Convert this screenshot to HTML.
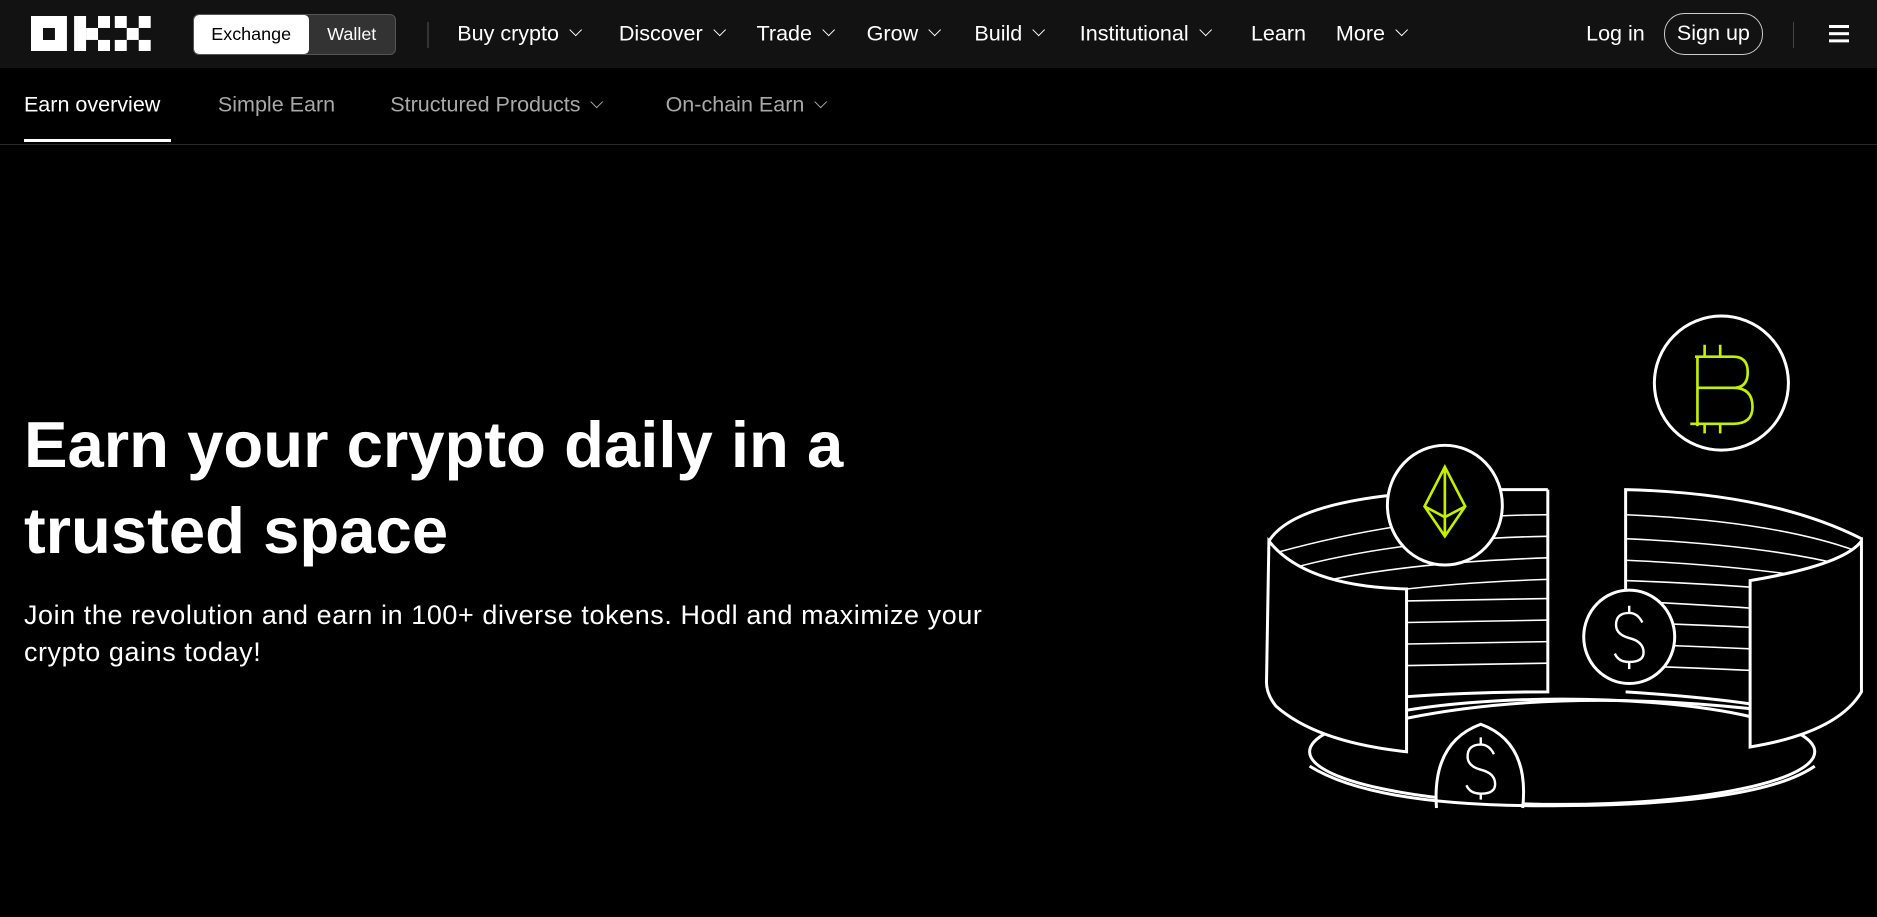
<!DOCTYPE html>
<html><head><meta charset="utf-8"><style>
html,body{margin:0;padding:0;background:#000;overflow:hidden}
#w{width:1568px;height:766px;zoom:1.19707;position:relative;font-family:"Liberation Sans",sans-serif;color:#fff}
.top{position:absolute;left:0;top:0;width:1568px;height:57px;background:#121212}
.t{position:absolute;top:28px;transform:translateY(-50%);font-size:18px;white-space:nowrap}
.chev{display:inline-block;width:7px;height:7px;border-right:1.5px solid #fff;border-bottom:1.5px solid #fff;transform:rotate(45deg);margin-left:10px;position:relative;top:-4px}
.sub{position:absolute;top:88px;transform:translateY(-50%);font-size:18px;color:#a8a8a8;white-space:nowrap}
.sub .chev{border-color:#a8a8a8}
</style></head><body><div id="w">
<div class="top">
<svg style="position:absolute;left:26px;top:13px" width="100" height="30" viewBox="0 0 100 30" fill="#fff">
<path d="M0 0h30v30H0zM10 10v10h10V10z" fill-rule="evenodd"/>
<rect x="36" y="0" width="10" height="30"/>
<rect x="46" y="10" width="10" height="10"/><rect x="56" y="0" width="10" height="10"/><rect x="56" y="20" width="10" height="10"/>
<rect x="70" y="0" width="10" height="10"/><rect x="90" y="0" width="10" height="10"/><rect x="80" y="10" width="10" height="10"/><rect x="70" y="20" width="10" height="10"/><rect x="90" y="20" width="10" height="10"/>
</svg>
<div style="position:absolute;left:161px;top:12px;width:168px;height:32px;border:1px solid #555;border-radius:5px;background:#333;overflow:hidden">
<div style="position:absolute;left:0;top:0;width:96px;height:32px;background:#fff;border-radius:4px;color:#000;font-size:15px;line-height:32px;text-align:center">Exchange</div>
<div style="position:absolute;left:96px;top:0;width:72px;height:32px;color:#fff;font-size:15px;line-height:32px;text-align:center">Wallet</div>
</div>
<div style="position:absolute;left:357px;top:18px;width:1px;height:22px;background:#333"></div>
<div class="t" style="left:382px">Buy crypto<span class="chev"></span></div>
<div class="t" style="left:517px">Discover<span class="chev"></span></div>
<div class="t" style="left:632px">Trade<span class="chev"></span></div>
<div class="t" style="left:724px">Grow<span class="chev"></span></div>
<div class="t" style="left:814px">Build<span class="chev"></span></div>
<div class="t" style="left:902px">Institutional<span class="chev"></span></div>
<div class="t" style="left:1045px">Learn</div>
<div class="t" style="left:1116px">More<span class="chev"></span></div>
<div class="t" style="left:1325px">Log in</div>
<div style="position:absolute;left:1390px;top:11px;width:81px;height:33px;border:1px solid #ccc;border-radius:17px;font-size:18px;line-height:33px;text-align:center">Sign up</div>
<div style="position:absolute;left:1498px;top:18px;width:1px;height:22px;background:#444"></div>
<div style="position:absolute;left:1528px;top:21px;width:17px;height:2px;background:#fff;box-shadow:0 6px 0 #fff,0 12px 0 #fff"></div>
</div>
<div class="sub" style="left:20px;color:#fff">Earn overview</div>
<div style="position:absolute;left:20px;top:116px;width:123px;height:3px;background:#fff"></div>
<div class="sub" style="left:182px">Simple Earn</div>
<div class="sub" style="left:326px">Structured Products<span class="chev"></span></div>
<div class="sub" style="left:556px">On-chain Earn<span class="chev"></span></div>
<div style="position:absolute;left:0;top:120px;width:1568px;height:1px;background:#2a2a2a"></div>
<div style="position:absolute;left:20px;top:336px;font-size:54.5px;font-weight:bold;line-height:72px">Earn your crypto daily in a<br>trusted space</div>
<div style="position:absolute;left:20px;top:499px;font-size:22.5px;letter-spacing:0.5px;line-height:31px">Join the revolution and earn in 100+ diverse tokens. Hodl and maximize your<br>crypto gains today!</div>
<svg style="position:absolute;left:0;top:0" width="1568" height="766" fill="none" stroke="#fff" stroke-width="2.5">
<ellipse cx="1305" cy="628" rx="211" ry="44" fill="#000"/>
<g stroke-width="1.3">
<path d="M1358 430 Q1480 435 1550 460M1358 450 Q1470 455 1540 472M1358 468 Q1450 472 1525 484M1358 485 Q1440 488 1505 494M1358 502 Q1420 505 1462 508M1358 520 Q1420 522 1462 524M1358 538 Q1420 540 1462 542M1358 556 Q1420 558 1462 560"/>
<path d="M1293 430 Q1180 430 1065 462M1293 448 Q1170 450 1078 475M1293 466 Q1170 470 1095 488M1293 484 Q1200 487 1130 498M1175 502 L1293 500M1175 520 L1293 518M1175 538 L1293 536M1175 556 L1293 554"/>
</g>
<path d="M1293 409 L1293 578 Q1230 578 1175 582"/>
<path d="M1240 409 L1293 409"/>
<path d="M1358 495 L1358 409 Q1480 412 1555 450"/>
<path d="M1358 578 Q1420 582 1462 588"/>
<path d="M1175 600 Q1300 575 1462 592"/>
<path d="M1060 452 Q1080 420 1180 412" />
<path d="M1060 452 Q1090 490 1175 492 L1175 628 Q1100 620 1066 590 Q1058 580 1058 570 Z" fill="#000"/>
<path d="M1555 452 Q1540 472 1462 485 L1462 624 Q1535 612 1555 578 Z" fill="#000"/>
<ellipse cx="1438" cy="320" rx="56" ry="56" fill="#000"/>
<ellipse cx="1207" cy="422" rx="48" ry="50" fill="#000"/>
<ellipse cx="1361" cy="532" rx="38" ry="39" fill="#000"/>
<path d="M1200 675 Q1196 620 1237 605 Q1278 620 1272 675" fill="#000"/>
<path d="M1094 640 Q1150 675 1305 673 Q1470 672 1516 640" stroke-width="2.5"/>
<g stroke="#c4f000" stroke-width="2.2">
<path d="M1416 298 H1448 Q1460 298 1460 311 Q1460 324 1448 324 H1418 M1448 324 Q1464 324 1464 340 Q1464 354 1448 354 H1412 M1418 298 V356 M1424 288 V298 M1437 288 V298 M1424 354 V362 M1437 354 V362"/>
<path d="M1207 390 L1190 423 L1207 448 L1224 423 Z M1207 390 V448 M1190 423 L1207 432 L1224 423"/>
</g>
<g stroke-width="2">
<path d="M1372 520 Q1368 512 1361 512 Q1350 512 1350 522 Q1350 530 1361 533 Q1373 536 1373 545 Q1373 553 1361 553 Q1352 553 1349 546 M1361 506 V512 M1361 553 V559"/>
<path d="M1248 630 Q1244 622 1237 622 Q1226 622 1226 632 Q1226 640 1237 643 Q1249 646 1249 655 Q1249 663 1237 663 Q1228 663 1225 656 M1237 616 V622 M1237 663 V668"/>
</g>
</svg>
</div></body></html>
